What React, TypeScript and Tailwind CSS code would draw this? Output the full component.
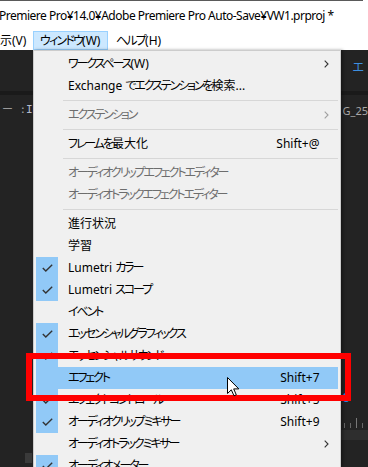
import React from 'react';

type Item =
  | { sep: true }
  | {
      sep?: false;
      label: string;
      checked?: boolean;
      disabled?: boolean;
      shortcut?: string;
      sub?: boolean;
      hover?: boolean;
    };

const items: Item[] = [
  { label: 'ワークスペース(W)', sub: true },
  { label: 'Exchange でエクステンションを検索...' },
  { sep: true },
  { label: 'エクステンション', sub: true, disabled: true },
  { sep: true },
  { label: 'フレームを最大化', shortcut: 'Shift+@' },
  { sep: true },
  { label: 'オーディオクリップエフェクトエディター', disabled: true },
  { label: 'オーディオトラックエフェクトエディター', disabled: true },
  { sep: true },
  { label: '進行状況' },
  { label: '学習' },
  { label: 'Lumetri カラー', checked: true },
  { label: 'Lumetri スコープ', checked: true },
  { label: 'イベント' },
  { label: 'エッセンシャルグラフィックス', checked: true },
  { label: 'エッセンシャルサウンド', checked: true },
  { label: 'エフェクト', shortcut: 'Shift+7', hover: true },
  { label: 'エフェクトコントロール', checked: true, shortcut: 'Shift+5' },
  { label: 'オーディオクリップミキサー', checked: true, shortcut: 'Shift+9' },
  { label: 'オーディオトラックミキサー', sub: true },
  { label: 'オーディオメーター', checked: true },
];

// kana runs are set tighter, like the narrow UI font in the screenshot
function Label({ text, tight = 'tracking-[-2.1px]' }: { text: string; tight?: string }) {
  const parts = text.split(/([\u3040-\u30ff]+)/);
  return (
    <>
      {parts.map((p, i) =>
        /[\u3040-\u30ff]/.test(p) ? (
          <span key={i} className={tight}>
            {p}
          </span>
        ) : (
          <span key={i}>{p}</span>
        )
      )}
    </>
  );
}

function Check() {
  return (
    <svg width="11" height="8" viewBox="0 0 11 8" fill="none">
      <path d="M0.8 4 L3.8 7 L10.2 0.8" stroke="#333" strokeWidth="1.4" />
    </svg>
  );
}

function Chevron({ dim }: { dim?: boolean }) {
  return (
    <svg width="5" height="8" viewBox="0 0 5 8" fill="none">
      <path d="M0.7 0.7 L4 4 L0.7 7.3" stroke={dim ? '#a0a0a0' : '#333'} strokeWidth="1.1" />
    </svg>
  );
}

function Cursor() {
  return (
    <svg width="13" height="20" viewBox="0 0 13 20">
      <path
        d="M0.5 0.5 L0.5 16.5 L4.3 12.8 L7 18.8 L9.3 17.8 L6.7 11.9 L11.8 11.9 Z"
        fill="#fff"
        stroke="#000"
        strokeWidth="1"
        strokeLinejoin="miter"
      />
    </svg>
  );
}

export default function App() {
  const font = "font-['Noto_Sans','Noto_Sans_CJK_JP',sans-serif] [font-feature-settings:'palt']";
  return (
    <div className={`relative w-[368px] h-[467px] overflow-hidden bg-white text-[12px] ${font}`}>
      {/* title bar */}
      <div className="h-[30px] flex flex-col">
        <div className="h-px w-[363px] bg-[#5a5a5a]" />
        <div className="flex-1 flex items-center -ml-px text-black whitespace-nowrap tracking-[-0.5px]">
          Premiere Pro¥14.0¥Adobe Premiere Pro Auto-Save¥VW1.prproj *
        </div>
      </div>

      {/* menu bar */}
      <div className="h-5 flex items-start text-black whitespace-nowrap">
        <div className="h-[19px] mt-px w-[33px] flex items-center">示(V)</div>
        <div className="h-[19px] mt-px w-[75px] flex items-center pl-[6px] bg-[#cce8ff] border border-[#99d1ff]">
          <Label text="ウィンドウ(W)" tight="tracking-[-1.8px]" />
        </div>
        <div className="h-[19px] mt-px flex items-center pl-2">
          <Label text="ヘルプ(H)" tight="tracking-[-1.8px]" />
        </div>
      </div>

      {/* body */}
      <div className="flex h-[417px]">
        {/* left panel */}
        <div className="w-[33px] bg-[#232323] flex flex-col">
          <div className="h-[41px]" />
          <div className="h-[4px] bg-[#1a1a1a]" />
          <div className="mt-[7px] pl-[2px] text-[11px] text-[#9a9a9a] whitespace-nowrap font-['DejaVu_Sans_Mono','Noto_Sans_CJK_JP',monospace]">
            ー :<span className="text-[#b4bccc]">IM</span>
          </div>
          <div className="flex-1" />
          <div className="ml-[25px] mb-[4px] w-[7px] h-[10px] bg-[#3a3a3a]" />
        </div>

        {/* dropdown menu */}
        <div className="w-[310px] bg-[#f0f0f0] border border-[#cccccc] border-b-0 p-[2px] pb-0 shadow-[2px_0_3px_rgba(0,0,0,0.35)] z-10">
          {items.map((it, i) =>
            it.sep ? (
              <div key={i} className="h-[7px] flex items-center pl-[27px]">
                <div className="h-px w-full bg-[#d7d7d7]" />
              </div>
            ) : (
              <div
                key={i}
                className={`h-[22px] flex items-center ${it.hover ? 'bg-[#91c9f7]' : ''} ${
                  it.disabled ? 'text-[#6d6d6d]' : 'text-black'
                }`}
              >
                <div
                  className={`w-[22px] h-full flex items-center justify-center ${
                    it.checked || it.hover ? 'bg-[#91c9f7]' : ''
                  }`}
                >
                  {it.checked && <Check />}
                </div>
                <div className="pl-[10px] flex-1 whitespace-nowrap">
                  <Label text={it.label} />
                </div>
                {it.shortcut && <div className="pr-[18px]">{it.shortcut}</div>}
                {it.sub && (
                  <div className="pr-[9px] flex items-center">
                    <Chevron dim={it.disabled} />
                  </div>
                )}
              </div>
            )
          )}
        </div>

        {/* right panel */}
        <div className="flex-1 bg-[#232323] flex flex-col">
          <div className="h-[41px] pl-[12px] pt-[12px] text-[12px] leading-none text-[#3d8fe0]">エ</div>
          <div className="h-[4px] bg-[#1a1a1a]" />
          <div className="mt-[10px] pl-[2px] text-[11px] leading-none text-[#a8a8a8] whitespace-nowrap">G_25</div>
          <div className="mt-[275px] pl-[2px] text-[13px] leading-none font-bold text-[#2a86e6]">0</div>
          <div className="mt-[14px] h-[10px] flex items-end gap-[5px] pl-[3px]">
            <div className="w-px h-[5px] bg-[#666]" />
            <div className="w-px h-[5px] bg-[#666]" />
            <div className="w-px h-[10px] bg-[#777]" />
            <div className="w-px h-[5px] bg-[#666]" />
          </div>
          <div className="h-[10px] mt-[2px] bg-[#2e2e2e]" />
        </div>
      </div>

      {/* annotation box */}
      <div className="absolute left-[26px] top-[353px] w-[325px] h-[48px] border-[6px] border-[#ff0000] z-20" />
      {/* cursor */}
      <div className="absolute left-[227px] top-[377px] z-30">
        <Cursor />
      </div>
    </div>
  );
}
